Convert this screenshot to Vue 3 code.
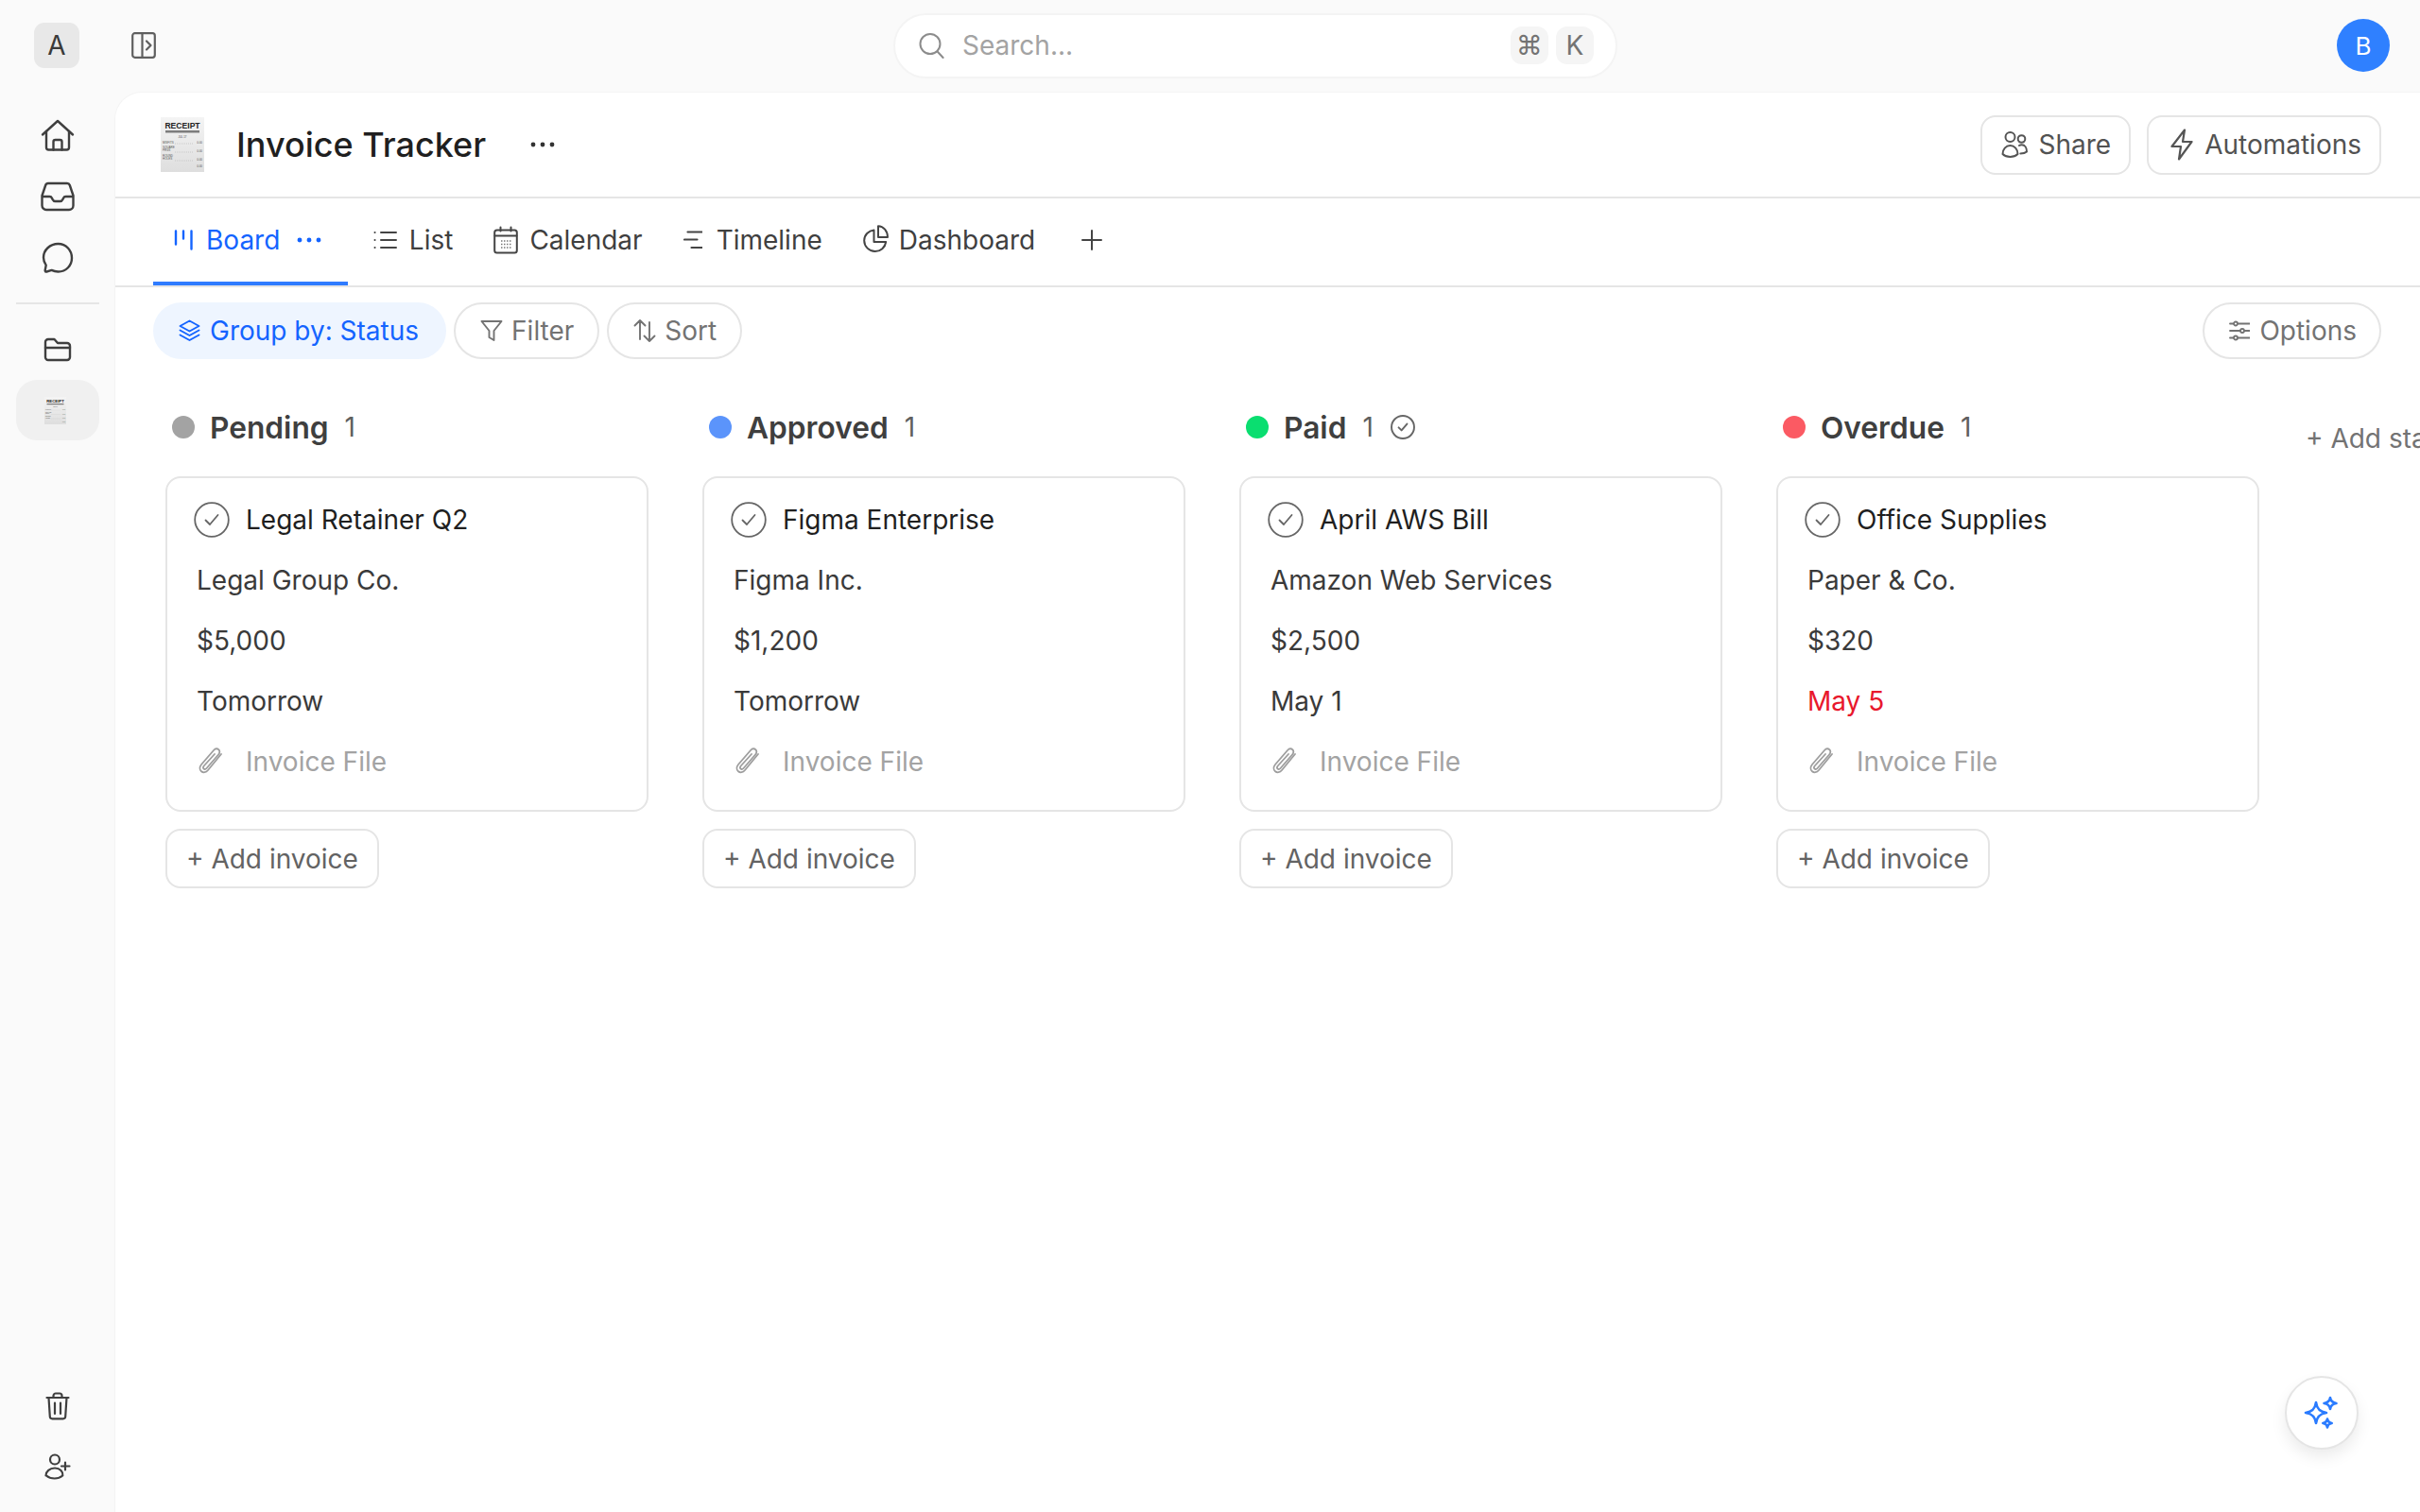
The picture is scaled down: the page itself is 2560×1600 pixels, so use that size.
<script setup>
const columns = [
  { name: 'Pending', dot: '#a3a3a3', title: 'Legal Retainer Q2', vendor: 'Legal Group Co.', amount: '$5,000', date: 'Tomorrow' },
  { name: 'Approved', dot: '#5b94fb', title: 'Figma Enterprise', vendor: 'Figma Inc.', amount: '$1,200', date: 'Tomorrow' },
  { name: 'Paid', dot: '#0ade70', title: 'April AWS Bill', vendor: 'Amazon Web Services', amount: '$2,500', date: 'May 1', done: true },
  { name: 'Overdue', dot: '#fb5a63', title: 'Office Supplies', vendor: 'Paper & Co.', amount: '$320', date: 'May 5', late: true },
]
const receiptRows = [
  { y: 28, a: 'MISFITS', vy: 28 },
  { y: 33, a: 'SQUARE', b: 'PEGS', vy: 37 },
  { y: 42, a: 'ROUND', b: 'HOLES', vy: 46 },
  { vy: 53 },
]
</script>

<template>
  <div class="shell">
    <header class="topbar">
      <div class="brand">A</div>
      <svg class="panel-icon" width="26" height="28" viewBox="0 0 26 28" fill="none" stroke="#5f5f5f" stroke-width="2.2" stroke-linecap="round" stroke-linejoin="round">
        <rect x="1.2" y="1.2" width="23.6" height="25.6" rx="2.5" />
        <path d="M11.5 1.5v25M16 9.5l4.5 4.5-4.5 4.5" />
      </svg>
      <div class="search">
        <svg width="27" height="28" viewBox="0 0 27 28" fill="none" stroke="#8c8c8c" stroke-width="2" stroke-linecap="round">
          <circle cx="12" cy="12.5" r="10.5" />
          <path d="M19.6 20.5l6 6.5" />
        </svg>
        <span class="search-text">Search...</span>
        <kbd class="key">⌘</kbd>
        <kbd class="key">K</kbd>
      </div>
      <div class="avatar">B</div>
    </header>

    <div class="body">
      <nav class="sidebar">
        <svg class="side-icon" width="36" height="34" viewBox="0 0 36 34" fill="none" stroke-width="2.4" stroke-linecap="round" stroke-linejoin="round">
          <path d="M2 16.5 18 2l16 14.5" />
          <path d="M6 13v17a2.5 2.5 0 0 0 2.5 2.5h19A2.5 2.5 0 0 0 30 30V13" />
          <path d="M13.5 32.5V24a2 2 0 0 1 2-2h5a2 2 0 0 1 2 2v8.5" />
        </svg>
        <svg class="side-icon" width="36" height="32" viewBox="0 0 36 32" fill="none" stroke-width="2.4" stroke-linecap="round" stroke-linejoin="round">
          <path d="M8 2h20a3 3 0 0 1 2.8 2L34.5 15v10.5a4.5 4.5 0 0 1-4.5 4.5H6a4.5 4.5 0 0 1-4.5-4.5V15L5.2 4A3 3 0 0 1 8 2z" />
          <path d="M2 16h7.5c1.2 0 2 .6 2.5 1.7l.6 1.3c.6 1.3 1.5 2 2.9 2h5c1.4 0 2.3-.7 2.9-2l.6-1.3c.5-1.1 1.3-1.7 2.5-1.7H34" />
        </svg>
        <svg class="side-icon" width="34" height="34" viewBox="0 0 34 34" fill="none" stroke-width="2.4" stroke-linecap="round" stroke-linejoin="round">
          <path d="M17.5 2C9 2 2 8.5 2 16.5c0 3 1 5.8 2.7 8.1l-1 5.4c-.2 1.1.6 1.8 1.6 1.5l5.3-1.6c2 1 4.4 1.6 6.9 1.6 8.5 0 14.5-6.5 14.5-14.5S26 2 17.5 2z" />
        </svg>
        <div class="side-divider"></div>
        <svg class="side-icon folder" width="30" height="26" viewBox="0 0 30 26" fill="none" stroke-width="2.4" stroke-linecap="round" stroke-linejoin="round">
          <path d="M2 5a3 3 0 0 1 3-3h6.5L15 6h10a3 3 0 0 1 3 3v12a3 3 0 0 1-3 3H5a3 3 0 0 1-3-3z" />
          <path d="M2 11h26" />
        </svg>
        <div class="side-active">
          <svg class="side-receipt" width="23" height="29" viewBox="0 0 46 58">
            <defs>
              <linearGradient id="rg1" x1="0" y1="0" x2="0" y2="1">
                <stop offset="0" stop-color="#f4f4f4" />
                <stop offset="1" stop-color="#dedede" />
              </linearGradient>
            </defs>
            <rect width="46" height="58" fill="url(#rg1)" />
            <text x="23" y="12" text-anchor="middle" font-family="Liberation Sans, sans-serif" font-weight="700" font-size="8.6" fill="#222">RECEIPT</text>
            <rect x="5" y="14" width="36" height="2.5" fill="#7d7d7d" />
            <text x="23" y="21.5" text-anchor="middle" font-family="Liberation Sans, sans-serif" font-size="2.8" fill="#444">JUL 17</text>
            <g v-for="r in receiptRows" :key="r.vy">
              <text x="2" :y="r.y" font-family="Liberation Sans, sans-serif" font-size="3" fill="#555">{{ r.a }}</text>
              <text x="2" :y="r.y + 3" font-family="Liberation Sans, sans-serif" font-size="3" fill="#555">{{ r.b }}</text>
              <text x="44" :y="r.vy" text-anchor="end" font-family="Liberation Sans, sans-serif" font-size="3" fill="#555">0.00</text>
              <line v-if="r.a" x1="15" x2="35" :y1="r.vy" :y2="r.vy" stroke="#aaa" stroke-width=".5" stroke-dasharray="1 1" />
            </g>
          </svg>
        </div>
        <div class="side-spacer"></div>
        <svg class="side-icon" width="26" height="30" viewBox="0 0 26 30" fill="none" stroke-width="2.2" stroke-linecap="round" stroke-linejoin="round">
          <path d="M1.5 6h23" />
          <path d="M8.5 6V4A2.5 2.5 0 0 1 11 1.5h4A2.5 2.5 0 0 1 17.5 4v2" />
          <path d="M3.5 6l1.3 20a2.5 2.5 0 0 0 2.5 2.3h11.4a2.5 2.5 0 0 0 2.5-2.3L22.5 6" />
          <path d="M10 11.5V23M16 11.5V23" />
        </svg>
        <svg class="side-icon user-add" width="28" height="28" viewBox="0 0 28 28" fill="none" stroke-width="2.2" stroke-linecap="round" stroke-linejoin="round">
          <circle cx="11" cy="6.5" r="5" />
          <path d="M1.5 23.5c0-4.5 4-8 9.5-8 3 0 5 1 6.5 2.5 1.5 1.5 2 3.5 1.8 5.5-2.5 2-5.5 3-8.5 3-3.5 0-6.3-.8-8.8-3z" />
          <path d="M22 9.5v8M18 13.5h8.5" />
        </svg>
      </nav>

      <main class="main">
        <div class="page-head">
          <svg class="page-logo" width="46" height="58" viewBox="0 0 46 58">
            <defs>
              <linearGradient id="rg2" x1="0" y1="0" x2="0" y2="1">
                <stop offset="0" stop-color="#f4f4f4" />
                <stop offset="1" stop-color="#dedede" />
              </linearGradient>
            </defs>
            <rect width="46" height="58" fill="url(#rg2)" />
            <text x="23" y="12" text-anchor="middle" font-family="Liberation Sans, sans-serif" font-weight="700" font-size="8.6" fill="#222">RECEIPT</text>
            <rect x="5" y="14" width="36" height="2.5" fill="#7d7d7d" />
            <text x="23" y="21.5" text-anchor="middle" font-family="Liberation Sans, sans-serif" font-size="2.8" fill="#444">JUL 17</text>
            <g v-for="r in receiptRows" :key="r.vy">
              <text x="2" :y="r.y" font-family="Liberation Sans, sans-serif" font-size="3" fill="#555">{{ r.a }}</text>
              <text x="2" :y="r.y + 3" font-family="Liberation Sans, sans-serif" font-size="3" fill="#555">{{ r.b }}</text>
              <text x="44" :y="r.vy" text-anchor="end" font-family="Liberation Sans, sans-serif" font-size="3" fill="#555">0.00</text>
              <line v-if="r.a" x1="15" x2="35" :y1="r.vy" :y2="r.vy" stroke="#aaa" stroke-width=".5" stroke-dasharray="1 1" />
            </g>
          </svg>
          <h1 class="page-title">Invoice Tracker</h1>
          <svg class="more" width="26" height="6" viewBox="0 0 26 6" fill="#333"><circle cx="3" cy="3" r="2.4" /><circle cx="13" cy="3" r="2.4" /><circle cx="23" cy="3" r="2.4" /></svg>
          <button class="btn">
            <svg width="28" height="30" viewBox="0 0 28 30" fill="none" stroke="#555" stroke-width="2" stroke-linecap="round" stroke-linejoin="round">
              <circle cx="9.5" cy="7" r="5" />
              <circle cx="21.5" cy="9" r="3.8" />
              <path d="M1.5 25c0-5 3.5-9 8-9s8 4 8 9c-2 2-5 3-8 3s-6-1-8-3z" />
              <path d="M19 16c.8-.5 1.7-.7 2.7-.7 3.2 0 5.3 3 5.3 7.2-1.4 1.3-4 2-6.7 2" />
            </svg>
            Share
          </button>
          <button class="btn">
            <svg class="bolt" width="24" height="34" viewBox="0 0 24 34" fill="none" stroke="#555" stroke-width="2.2" stroke-linecap="round" stroke-linejoin="round">
              <path d="M15 1.5 1.5 19H11l-2 13.5L22.5 14H13z" />
            </svg>
            Automations
          </button>
        </div>

        <div class="tabs">
          <div class="tab active">
            <svg width="20" height="22" viewBox="0 0 20 22" fill="none" stroke="#1464ff" stroke-width="2.4" stroke-linecap="round">
              <path d="M2 1.5v14M10 1.5v8M18.5 1.5v19" />
            </svg>
            <span>Board</span>
            <svg class="tab-more" width="26" height="6" viewBox="0 0 26 6" fill="#1464ff"><circle cx="3" cy="3" r="2.4" /><circle cx="13" cy="3" r="2.4" /><circle cx="23" cy="3" r="2.4" /></svg>
          </div>
          <div class="tab">
            <svg width="25" height="22" viewBox="0 0 25 22" fill="none" stroke="#444" stroke-width="2" stroke-linecap="round">
              <path d="M8 3h16M8 11h16M8 19h16M1.5 3h.1M1.5 11h.1M1.5 19h.1" />
            </svg>
            <span>List</span>
          </div>
          <div class="tab calendar">
            <svg width="26" height="30" viewBox="0 0 26 30" fill="none" stroke="#444" stroke-width="2" stroke-linecap="round" stroke-linejoin="round">
              <rect x="1.2" y="4.5" width="23.6" height="24" rx="2.5" />
              <path d="M1.5 10.5h23M7.5 1.5v4M18.5 1.5v4" />
              <path d="M8 16h11M8 19.5h11M8 23h11" stroke-dasharray="1.5 1.5" stroke-linecap="butt" stroke-width="1.6" stroke="#777" />
            </svg>
            <span>Calendar</span>
          </div>
          <div class="tab">
            <svg class="timeline" width="20" height="22" viewBox="0 0 20 22" fill="none" stroke="#444" stroke-width="2.2" stroke-linecap="round">
              <path d="M4.5 2.5h15M1 10.5h13.5M8.5 19h11" />
            </svg>
            <span>Timeline</span>
          </div>
          <div class="tab dash">
            <svg width="27" height="32" viewBox="0 0 27 32" fill="none" stroke="#444" stroke-width="2" stroke-linecap="round" stroke-linejoin="round">
              <path d="M11.5 5.5C5.8 6 1.2 10.7 1.2 16.5a11.5 11.5 0 0 0 11.5 11.5c5.8 0 10.7-4.3 11.5-10H11.5z" />
              <path d="M16 1.2V13h10c0-6.5-4.5-11.8-10-11.8z" />
            </svg>
            <span>Dashboard</span>
          </div>
          <svg class="tab-plus" width="22" height="22" viewBox="0 0 22 22" fill="none" stroke="#444" stroke-width="2" stroke-linecap="round">
            <path d="M11 1v20M1 11h20" />
          </svg>
        </div>

        <div class="toolbar">
          <button class="pill group">
            <svg width="23" height="24" viewBox="0 0 23 24" fill="none" stroke="#1464ff" stroke-width="1.9" stroke-linecap="round" stroke-linejoin="round">
              <path d="M11.5 1.5 21.5 7l-10 5.5L1.5 7z" />
              <path d="M1.5 11.5l10 5.5 10-5.5" />
              <path d="M1.5 16.5l10 5.5 10-5.5" />
            </svg>
            Group by: Status
          </button>
          <button class="pill">
            <svg width="24" height="24" viewBox="0 0 24 24" fill="none" stroke="#737373" stroke-width="1.9" stroke-linecap="round" stroke-linejoin="round">
              <path d="M1.5 2h21L14.5 12v10l-5-3v-7z" />
            </svg>
            Filter
          </button>
          <button class="pill">
            <svg width="24" height="26" viewBox="0 0 24 26" fill="none" stroke="#737373" stroke-width="1.9" stroke-linecap="round" stroke-linejoin="round">
              <path d="M7 22V2M1.5 7.5 7 2l5.5 5.5M17 4v20M11.5 18.5 17 24l5.500-5.500" />
            </svg>
            Sort
          </button>
          <button class="pill options">
            <svg width="22" height="22" viewBox="0 0 22 22" fill="none" stroke="#737373" stroke-width="1.8" stroke-linecap="round">
              <path d="M1 3.5h21M1 11h21M1 18.5h21" />
              <circle cx="7" cy="3.5" r="2" fill="#fff" />
              <circle cx="14" cy="11" r="2" fill="#fff" />
              <circle cx="7" cy="18.5" r="2" fill="#fff" />
            </svg>
            Options
          </button>
        </div>

        <section class="board">
          <div v-for="c in columns" :key="c.name" class="column">
            <div class="col-head">
              <span class="dot" :style="{ background: c.dot }"></span>
              <span class="col-name">{{ c.name }}</span>
              <span class="col-count">1</span>
              <svg v-if="c.done" class="col-check" width="26" height="26" viewBox="0 0 38 38" fill="none" stroke="#666" stroke-width="2.8" stroke-linecap="round" stroke-linejoin="round">
                <circle cx="19" cy="19" r="17.5" />
                <path d="M12.5 19.5l4.5 4.5 8.5-10" />
              </svg>
            </div>
            <article class="card">
              <div class="row title-row">
                <svg width="38" height="38" viewBox="0 0 38 38" fill="none" stroke="#666" stroke-width="1.8" stroke-linecap="round" stroke-linejoin="round">
                  <circle cx="19" cy="19" r="17.8" />
                  <path d="M12.5 19.5l4.5 4.5 8.5-10" />
                </svg>
                <span>{{ c.title }}</span>
              </div>
              <div class="row">{{ c.vendor }}</div>
              <div class="row">{{ c.amount }}</div>
              <div class="row" :class="{ late: c.late }">{{ c.date }}</div>
              <div class="row file">
                <svg class="clip" width="28" height="30" viewBox="0 0 28 30" fill="none" stroke="#9e9e9e" stroke-width="1.8" stroke-linecap="round" stroke-linejoin="round">
                  <path d="M25 7 11 24c-2 2.5-5 3-7 1.3S2 20.5 4 18L17 3c1.5-1.7 3.8-2 5.3-.8s1.3 3.5-.2 5.3L9.5 22c-.9 1-2.2 1.200-3 .5s-.6-2 .2-3L18 7" />
                </svg>
                <span>Invoice File</span>
              </div>
            </article>
            <button class="add">+ Add invoice</button>
          </div>
          <div class="add-status">+ Add status</div>
        </section>

        <button class="fab">
          <svg width="38" height="38" viewBox="0 0 38 38" fill="none" stroke="#2a7bff" stroke-width="2.6" stroke-linejoin="round">
            <path d="M13 8c1 7 4 10 11 11-7 1-10 4-11 11-1-7-4-10-11-11 7-1 10-4 11-11z" />
            <path d="M28 3c.6 4 2.4 5.4 6.5 6-4.100.6-5.900 2-6.500 6-.6-4-2.400-5.400-6.500-6 4.100-.6 5.900-2 6.500-6z" />
            <path d="M25 25.500c.5 3 1.700 4 4.700 4.500-3 .5-4.200 1.500-4.700 4.500-.5-3-1.700-4-4.700-4.500 3-.5 4.200-1.500 4.700-4.500z" />
          </svg>
        </button>
      </main>
    </div>
  </div>
</template>

<style>
html, body { margin: 0; background: #fafafa; overflow: hidden; }
</style>

<style scoped>
.shell {
  display: flex;
  flex-direction: column;
  width: 2560px;
  height: 1600px;
  overflow: hidden;
  background: #fafafa;
  font-family: Inter, "Liberation Sans", sans-serif;
  font-size: 28px;
  color: #3a3a3a;
}
button { font: inherit; background: #fff; cursor: pointer; margin: 0; }

.topbar {
  display: flex;
  align-items: center;
  flex: 0 0 98px;
  box-sizing: border-box;
  padding: 0 32px 2px 36px;
}
.brand {
  display: flex;
  align-items: center;
  justify-content: center;
  width: 48px;
  height: 48px;
  border-radius: 11px;
  background: #e8e8e8;
  color: #3a3a3a;
}
.panel-icon { margin-left: 55px; }
.search {
  display: flex;
  align-items: center;
  width: 766px;
  height: 69px;
  box-sizing: border-box;
  margin-left: 780px;
  padding: 0 23px 0 25px;
  gap: 8px;
  background: #fff;
  border: 2px solid #f4f4f4;
  border-radius: 35px;
}
.search-text { flex: 1; margin-left: 11px; color: #a3a3a3; }
.key {
  display: flex;
  align-items: center;
  justify-content: center;
  width: 40px;
  height: 40px;
  border-radius: 12px;
  background: #f5f5f5;
  color: #737373;
  font-family: "DejaVu Sans", Inter, sans-serif;
  font-size: 28px;
}
.key + .key { font-family: Inter, sans-serif; }
.avatar {
  display: flex;
  align-items: center;
  justify-content: center;
  width: 56px;
  height: 56px;
  margin-left: auto;
  border-radius: 50%;
  background: #2f80ff;
  color: #fff;
  font-size: 26px;
}

.body { display: flex; flex: 1; min-height: 0; }
.sidebar {
  display: flex;
  flex-direction: column;
  align-items: center;
  flex: 0 0 122px;
  padding: 28px 0 34px;
}
.side-icon { stroke: #3f3f3f; }
.side-icon + .side-icon { margin-top: 32px; }
.side-icon.user-add { margin-top: 35px; }
.side-divider { width: 88px; height: 2px; margin: 30px 0 35px; background: #e5e5e5; }
.folder { margin-bottom: 19px; }
.side-active {
  display: flex;
  align-items: center;
  justify-content: center;
  width: 88px;
  height: 64px;
  border-radius: 22px;
  background: #f0f0f0;
}
.side-receipt { margin-right: 6px; }
.side-spacer { flex: 1; }

.main {
  position: relative;
  flex: 1;
  min-width: 0;
  display: flex;
  flex-direction: column;
  background: #fff;
  border-top-left-radius: 28px;
  box-shadow: 0 0 0 1px #f4f4f4;
  overflow: hidden;
}
.page-head {
  display: flex;
  align-items: center;
  flex: 0 0 112px;
  box-sizing: border-box;
  padding: 0 41px 0 48px;
  border-bottom: 2px solid #e5e5e5;
}
.page-logo { margin-right: 34px; }
.page-title {
  margin: 0;
  font-size: 36px;
  font-weight: 500;
  color: #1f1f1f;
}
.more { margin-left: 47px; margin-right: auto; }
.btn {
  display: flex;
  align-items: center;
  gap: 11px;
  height: 63px;
  box-sizing: border-box;
  padding: 0 19px 0 20px;
  border: 2px solid #e5e5e5;
  border-radius: 16px;
  color: #525252;
}
.btn + .btn { margin-left: 17px; }
.bolt { margin: 0 1px 0 3px; }

.tabs {
  display: flex;
  align-items: center;
  flex: 0 0 94px;
  box-sizing: border-box;
  padding-left: 40px;
  border-bottom: 2px solid #e5e5e5;
}
.tab {
  position: relative;
  display: flex;
  align-items: center;
  gap: 13px;
  height: 100%;
  box-sizing: border-box;
  padding: 0 21.5px 4px;
  color: #3f3f3f;
}
.tab.active { padding: 0 28px 4px 22px; margin-right: 5px; gap: 14px; color: #1464ff; }
.tab.active::after {
  content: "";
  position: absolute;
  left: 0;
  right: 0;
  bottom: 0;
  height: 4px;
  background: #2f7bff;
}
.tab-more { margin-left: 4px; }
.tab.calendar { gap: 12px; }
.timeline { margin-right: 2px; }
.tab.dash { gap: 11px; }
.tab-plus { margin: 0 0 4px 27px; }

.toolbar {
  display: flex;
  align-items: center;
  flex: 0 0 auto;
  gap: 8px;
  padding: 16px 41px 0 40px;
}
.pill {
  display: flex;
  align-items: center;
  gap: 9px;
  height: 60px;
  box-sizing: border-box;
  padding: 0 25px 0 26px;
  border: 2px solid #e5e5e5;
  border-radius: 30px;
  color: #737373;
}
.pill.group {
  gap: 10px;
  padding: 0 27px 0 25px;
  border-color: #eef5ff;
  background: #eef5ff;
  color: #1464ff;
}
.pill.options { margin-left: auto; gap: 10px; padding-right: 24px; }

.board {
  display: flex;
  gap: 31px;
  flex: 1;
  padding: 60px 0 0 40px;
}
.column { flex: 0 0 537px; box-sizing: border-box; padding: 0 13px; }
.col-head {
  display: flex;
  align-items: center;
  height: 24px;
  padding-left: 7px;
  margin-bottom: 40px;
}
.dot { flex: 0 0 24px; height: 24px; border-radius: 50%; }
.col-name { margin-left: 16px; font-size: 31.7px; font-weight: 600; color: #3f3f3f; }
.col-count { margin-left: 17px; color: #5f5f5f; }
.col-check { margin-left: 18px; }
.card {
  display: flex;
  flex-direction: column;
  height: 355px;
  box-sizing: border-box;
  padding: 12px 30px 0 31px;
  border: 2px solid #e5e5e5;
  border-radius: 16px;
}
.row {
  display: flex;
  align-items: center;
  flex: 0 0 64px;
  white-space: nowrap;
  color: #3a3a3a;
}
.title-row { margin-left: -3px; gap: 17px; color: #1f1f1f; }
.late { color: #e8182c; }
.file { gap: 23px; color: #a3a3a3; }
.clip { margin-left: 1px; }
.add {
  display: block;
  height: 63px;
  box-sizing: border-box;
  margin-top: 18px;
  padding: 0 20px;
  border: 2px solid #e5e5e5;
  border-radius: 16px;
  color: #636363;
}
.add-status {
  margin: 7px 0 0 5px;
  white-space: nowrap;
  color: #737373;
}
.fab {
  position: absolute;
  right: 65px;
  bottom: 66px;
  display: flex;
  align-items: center;
  justify-content: center;
  width: 78px;
  height: 78px;
  padding: 0;
  border: 2px solid #e5e5e5;
  border-radius: 50%;
  box-shadow: 0 8px 16px rgba(0, 0, 0, 0.08);
}
</style>
